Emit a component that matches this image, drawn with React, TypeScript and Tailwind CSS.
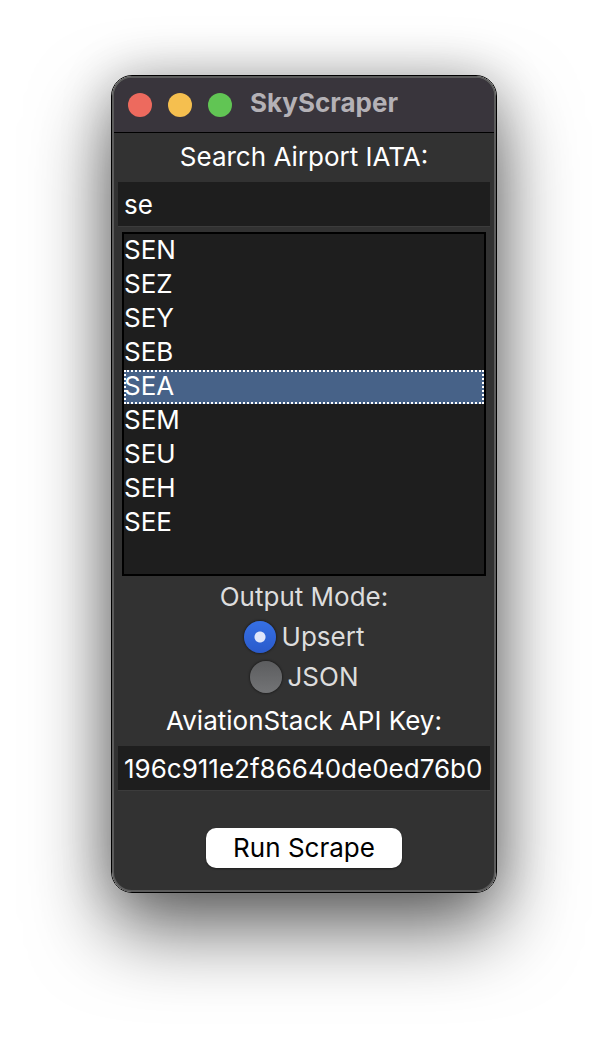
import { useState } from "react";

const AIRPORTS = ["SEN", "SEZ", "SEY", "SEB", "SEA", "SEM", "SEU", "SEH", "SEE"];
const MODES = ["Upsert", "JSON"];

const FIELD =
  "block h-[45px] w-full bg-[#1e1e1e] px-1.5 text-[26px] text-white outline-none border-b border-[#3c3c3c]";
const CAPTION = "pt-2 pb-[9px] text-center text-white";

export default function App() {
  const [query, setQuery] = useState("se");
  const [airport, setAirport] = useState("SEA");
  const [mode, setMode] = useState("Upsert");
  const [apiKey, setApiKey] = useState("196c911e2f86640de0ed76b0");

  return (
    <div className="flex min-h-screen items-start justify-center bg-white px-4 pt-[75px] pb-[147px] font-['Inter','Liberation_Sans',sans-serif] text-[26px] leading-8">
      <main className="w-full max-w-[386px] rounded-[21px] border border-black shadow-[0_36px_80px_rgba(0,0,0,0.6),0_0_50px_rgba(0,0,0,0.22)]">
        <div className="overflow-hidden rounded-[20px] border-2 border-[#5c5c5c] bg-[#323232]">
          <header className="flex h-[55px] items-center gap-4 border-b border-black bg-[#39353c] px-3.5">
            <button aria-label="Close" className="size-6 shrink-0 rounded-full bg-[#ed6a5e]" />
            <button aria-label="Minimize" className="size-6 shrink-0 rounded-full bg-[#f5bf4f]" />
            <button aria-label="Zoom" className="size-6 shrink-0 rounded-full bg-[#61c554]" />
            <h1 className="pb-1 pl-0.5 font-bold text-[#b4b1b6]">SkyScraper</h1>
          </header>

          <form className="flex flex-col px-1 pb-[22px]" onSubmit={(e) => e.preventDefault()}>
            <label htmlFor="query" className={CAPTION}>
              Search Airport IATA:
            </label>
            <input
              id="query"
              type="text"
              value={query}
              onChange={(e) => setQuery(e.target.value)}
              className={FIELD}
            />

            <select
              aria-label="Airports"
              size={10}
              value={airport}
              onChange={(e) => setAirport(e.target.value)}
              className="mx-1 mt-[5px] h-[344px] overflow-hidden rounded-none border-2 border-black bg-[#1e1e1e] text-[26px] text-white scheme-dark outline-none"
            >
              {AIRPORTS.map((code) => (
                <option
                  key={code}
                  value={code}
                  className="h-[34px] min-h-[34px] p-0 leading-[34px] text-white checked:bg-[linear-gradient(#476288,#476288)] checked:outline-2 checked:-outline-offset-2 checked:outline-dotted checked:outline-white"
                >
                  {code}
                </option>
              ))}
            </select>

            <fieldset className="flex flex-col items-center">
              <legend className="mx-auto pt-[5px] pb-1 text-[#dddddd]">Output Mode:</legend>
              {MODES.map((name) => (
                <label key={name} className="flex h-10 items-center gap-1.5 text-[#dddddd]">
                  <input
                    type="radio"
                    name="mode"
                    checked={mode === name}
                    onChange={() => setMode(name)}
                    className="size-8 appearance-none rounded-full bg-linear-to-b from-[#5c5d5f] to-[#737476] shadow-[0_0_2px_1px_rgba(0,0,0,0.35)] checked:bg-[radial-gradient(circle,#e0e6fa_5px,transparent_6px),linear-gradient(#3670e4,#2a5acb)]"
                  />
                  {name}
                </label>
              ))}
            </fieldset>

            <label htmlFor="api-key" className={CAPTION}>
              AviationStack API Key:
            </label>
            <input
              id="api-key"
              type="text"
              value={apiKey}
              onChange={(e) => setApiKey(e.target.value)}
              className={FIELD}
            />

            <button
              type="submit"
              className="mx-auto mt-[37px] h-10 w-[196px] rounded-[10px] bg-white text-black shadow-[0_1px_2px_rgba(0,0,0,0.4)]"
            >
              Run Scrape
            </button>
          </form>
        </div>
      </main>
    </div>
  );
}
